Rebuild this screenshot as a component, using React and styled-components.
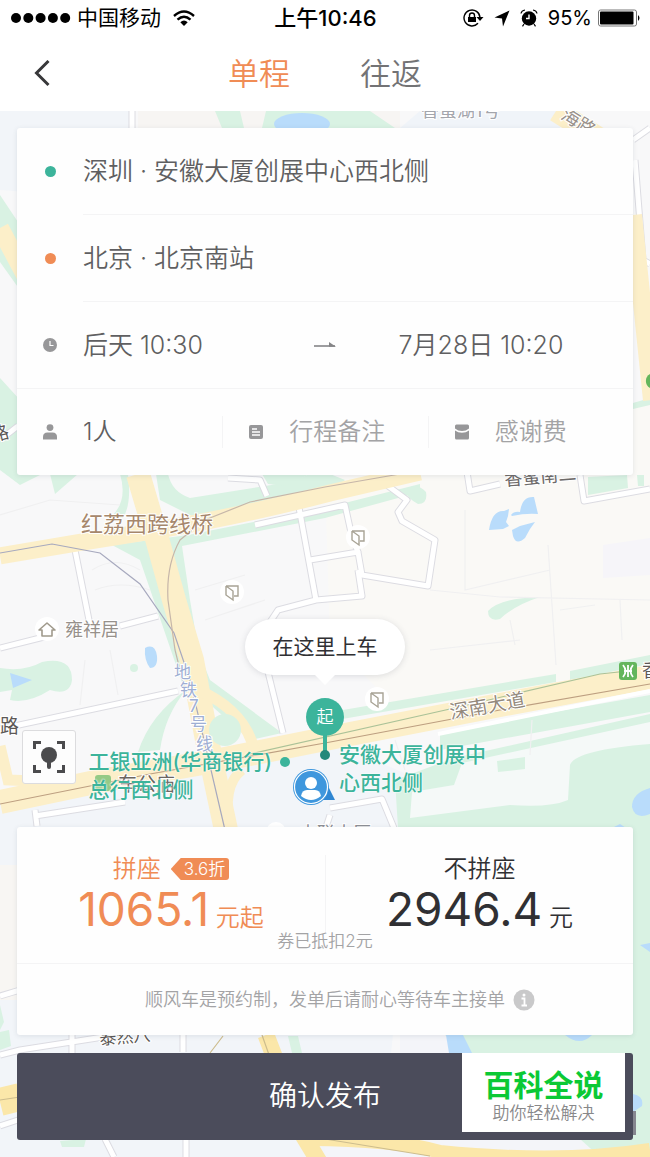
import { useState } from 'react'
import styled, { createGlobalStyle } from 'styled-components'

const colors = {
  orange: '#f08c55',
  teal: '#3cb49b',
  text: '#5f5f61',
  dark: '#303033',
  muted: '#a3a3a5',
  icon: '#979799',
  line: '#f4f4f5',
  slate: '#4b4c5b'
}

const tabs = ['单程', '往返']

const extras = [
  { icon: 'person', label: '1人', filled: true },
  { icon: 'note', label: '行程备注' },
  { icon: 'packet', label: '感谢费' }
]

const App = () => {
  const [tab, setTab] = useState(0)
  const [share, setShare] = useState(true)

  return (
    <Page>
      <GlobalStyle />
      <StatusBar>
        <Carrier>
          <SignalIcon />
          <span>中国移动</span>
          <WifiIcon />
        </Carrier>
        <Clock>上午10:46</Clock>
        <Indicators>
          <LockIcon />
          <LocationIcon />
          <AlarmIcon />
          <span>95%</span>
          <BatteryIcon />
        </Indicators>
      </StatusBar>

      <NavBar>
        <BackButton aria-label="返回">
          <svg width="18" height="28" viewBox="0 0 18 28" fill="none" stroke="#38383a" strokeWidth="3">
            <path d="M15.500 1 L3.500 13 L15.500 25" />
          </svg>
        </BackButton>
        <Tabs>
          {tabs.map((name, idx) => (
            <Tab key={name} $active={tab === idx} onClick={() => setTab(idx)}>{name}</Tab>
          ))}
        </Tabs>
      </NavBar>

      <Main>
        <MapDrawing />

        <Card>
          <Row>
            <Slot><Dot $color={colors.teal} /></Slot>
            <Field>深圳 · 安徽大厦创展中心西北侧</Field>
          </Row>
          <Row>
            <Slot><Dot $color={colors.orange} /></Slot>
            <Field>北京 · 北京南站</Field>
          </Row>
          <TimeRow>
            <TimeStart>
              <Slot><ClockIcon /></Slot>
              <span>后天 10:30</span>
            </TimeStart>
            <svg width="24" height="10" viewBox="0 0 24 10" aria-hidden="true">
              <path d="M1 6 H22" fill="none" stroke="#858587" strokeWidth="1.600" />
              <path d="M16 2 L23 6.800 H16 Z" fill="#858587" />
            </svg>
            <TimeEnd>7月28日 10:20</TimeEnd>
          </TimeRow>
          <ExtrasRow>
            {extras.map(item => (
              <Extra key={item.label} $filled={item.filled}>
                <Slot><ExtraIcon name={item.icon} /></Slot>
                <span>{item.label}</span>
              </Extra>
            ))}
          </ExtrasRow>
        </Card>

        <Stage>
          <LocateButton aria-label="定位">
            <svg width="32" height="32" viewBox="0 0 32 32">
              <path d="M1.500 8 V1.500 H8 M24 1.500 H30.500 V8 M30.500 24 V30.500 H24 M8 30.500 H1.500 V24" fill="none" stroke="#4b4b4d" strokeWidth="3" />
              <circle cx="16" cy="14" r="8" fill="#4b4b4d" />
              <path d="M16 20 V26" stroke="#4b4b4d" strokeWidth="4" strokeLinecap="round" />
            </svg>
          </LocateButton>
          <Bubble>在这里上车</Bubble>
          <Pin><span>起</span></Pin>
          <Me>
            <svg width="44" height="38" viewBox="0 0 44 38">
              <path d="M34 14 L43 32 L24 32 Z" fill="#2f86d2" />
              <circle cx="19" cy="19" r="18" fill="#3f97dd" />
              <circle cx="19" cy="19" r="16.500" fill="none" stroke="#fff" strokeWidth="1.200" />
              <circle cx="19" cy="15" r="6" fill="#fff" />
              <path d="M9 28 Q10 22 15 22 H23 Q28 22 29 28 Q19 36 9 28Z" fill="#fff" />
            </svg>
          </Me>
          <StopDot />
          <LeftStop>工银亚洲(华商银行)<br />总行西北侧</LeftStop>
          <RightStop>安徽大厦创展中<br />心西北侧</RightStop>
        </Stage>

        <Card>
          <Prices>
            <Option $active={share} onClick={() => setShare(true)}>
              <OptionTitle>拼座<Badge>3.6折</Badge></OptionTitle>
              <Price><Amount>1065.1</Amount> 元起</Price>
            </Option>
            <Option $active={!share} onClick={() => setShare(false)}>
              <OptionTitle>不拼座</OptionTitle>
              <Price><Amount>2946.4</Amount> 元</Price>
            </Option>
          </Prices>
          <Coupon>券已抵扣2元</Coupon>
          <Hint>
            <HintText>顺风车是预约制，发单后请耐心等待车主接单</HintText>
            <InfoButton aria-label="说明">
              <svg width="22" height="22" viewBox="0 0 22 22">
                <circle cx="11" cy="11" r="10.500" fill="#c9c9ca" />
                <path d="M8.500 9.500 H11.500 V16 M8.500 16.500 H14" fill="none" stroke="#fff" strokeWidth="1.800" />
                <circle cx="11" cy="6" r="1.500" fill="#fff" />
              </svg>
            </InfoButton>
          </Hint>
        </Card>

        <Footer>
          <Submit>确认发布</Submit>
          <SiteMark>
            <SiteName>百科全说</SiteName>
            <SiteSlogan>助你轻松解决</SiteSlogan>
          </SiteMark>
        </Footer>
      </Main>
    </Page>
  )
}

export default App

const SignalIcon = () => (
  <svg width="60" height="12" viewBox="0 0 60 12">
    {[5, 17.3, 29.600, 41.900, 54.200].map(x => <circle key={x} cx={x} cy="6" r="5" />)}
  </svg>
)

const WifiIcon = () => (
  <svg width="22" height="17" viewBox="0 0 22 17" fill="none" stroke="#000" strokeWidth="2.400">
    <path d="M1 6 Q11 -3 21 6" />
    <path d="M4.500 9.600 Q11 3.800 17.500 9.600" />
    <path d="M7.300 12.200 Q11 9 14.700 12.200 L11 16 Z" fill="#000" stroke="none" />
  </svg>
)

const LockIcon = () => (
  <svg width="21" height="18" viewBox="0 0 21 18">
    <path d="M15 14.300 A8 8 0 1 1 17 8.500" fill="none" stroke="#000" strokeWidth="1.400" />
    <path d="M13.500 8 H20.500 L17 12 Z" />
    <path d="M5 8 H13 V13 H5 Z" />
    <path d="M6.500 8.500 V6.500 A2.500 2.500 0 0 1 11.500 6.500 V8.500" fill="none" stroke="#000" strokeWidth="1.400" />
  </svg>
)

const LocationIcon = () => (
  <svg width="16" height="17" viewBox="0 0 16 17">
    <path d="M15.500 0.500 L9 16.500 L8 8.500 L0.500 7.500 Z" />
  </svg>
)

const AlarmIcon = () => (
  <svg width="18" height="18" viewBox="0 0 18 18">
    <circle cx="9" cy="9.500" r="7.200" />
    <path d="M1 4.500 Q1.500 1.500 5 1 M17 4.500 Q16.500 1.500 13 1 M4 15 L2.500 17.300 M14 15 L15.500 17.300" fill="none" stroke="#000" strokeWidth="1.200" />
    <path d="M9 5.500 V9.500 H6" fill="none" stroke="#fff" strokeWidth="1.400" />
  </svg>
)

const BatteryIcon = () => (
  <svg width="42" height="18" viewBox="0 0 42 18">
    <rect x="0.500" y="1" width="38" height="16" rx="2" fill="#fff" stroke="#777" />
    <rect x="2" y="2.500" width="33.500" height="13" rx="1" />
    <path d="M40 6 Q43 9 40 12 Z" />
  </svg>
)

const ClockIcon = () => (
  <svg width="14" height="14" viewBox="0 0 14 14">
    <circle cx="7" cy="7" r="7" fill={colors.icon} />
    <path d="M7 3 V7.500 H10.500" fill="none" stroke="#fff" strokeWidth="1.200" />
  </svg>
)

const ExtraIcon = ({ name }) => (
  <svg width="16" height="16" viewBox="0 0 16 16" fill={colors.icon}>
    {name === 'person' && (
      <>
        <circle cx="8" cy="3.600" r="3.400" />
        <path d="M1 15.500 V13 Q1 8.500 5.500 8.500 H10.500 Q15 8.500 15 13 V15.500 Z" />
      </>
    )}
    {name === 'note' && (
      <>
        <rect x="1" y="1" width="14" height="14" rx="2" />
        <path d="M4 5 H9 M4 8 H12 M4 11 H12" stroke="#fff" strokeWidth="1.300" />
      </>
    )}
    {name === 'packet' && (
      <>
        <path d="M1 2 Q1 0.500 2.500 0.500 H13.500 Q15 0.500 15 2 V4.500 Q12 7 8 7 Q4 7 1 4.500 Z" />
        <path d="M1 6.500 Q4 8.800 8 8.800 Q12 8.800 15 6.500 V14 Q15 15.500 13.500 15.500 H2.500 Q1 15.500 1 14 Z" />
      </>
    )}
  </svg>
)

const Building = ({ x, y }) => (
  <g transform={`translate(${x} ${y})`}>
    <circle r="12" fill="#fff" />
    <path d="M-6 -6 H6 V4 H2 M-6 -6 V3 L1 8 V-1 L-6 -6" fill="none" stroke="#a8a395" strokeWidth="1.400" />
  </g>
)

const MapDrawing = () => (
  <MapSvg viewBox="0 111 650 1046" preserveAspectRatio="xMidYMin slice" aria-hidden="true">
    <rect y="111" width="650" height="1046" fill="#f8f8f9" />
    {/* districts */}
    <path d="M0 111 H135 V200 L0 190 Z M0 800 L340 745 L420 780 L380 1157 H0 Z" fill="#f2f5f9" />
    <path d="M138 111 H400 V128 H138 Z" fill="#f7f5f3" />
    <path d="M420 111 H560 V128 H400 Z" fill="#f0f4f9" />
    <path d="M325 480 L650 400 V680 L400 712 L330 640 Z" fill="#faf9f6" />
    <path d="M0 865 H20 V1000 H0 Z" fill="#f8f6f3" />
    <path d="M603 545 L650 538 V575 L603 578 Z" fill="#f6f5f9" />

    {/* parks */}
    <g fill="#d9f2e3">
      <path d="M215 111 H240 L244 128 H222 Z M266 111 H370 L395 128 H262 Z" />
      <path d="M0 195 L20 225 V290 L0 262 Z M0 378 L20 400 V475 H40 L20 485 L0 470 Z" />
      <path d="M50 474 H78 L55 494 Z" />
      <path d="M120 474 H128 Q132 505 122 520 L112 516 Q128 500 120 474 Z" />
      <path d="M156 474 H168 Q172 492 190 498 L290 482 L320 470 L345 480 L320 500 L200 520 L160 500 Z" />
      <path d="M188 535 L325 508 L420 484 V492 L325 518 L182 546 L190 600 L207 700 H188 L140 560 L112 545 Z" />
      <path d="M262 474 H310 L285 486 L268 484 Z" />
      <path d="M0 668 Q24 672 42 662 Q72 656 72 680 Q70 696 50 690 Q28 704 10 700 L12 690 L0 692 Z" />
      <path d="M186 690 Q165 715 160 750 L138 752 Q150 715 186 690 Z" />
      <circle cx="134" cy="668" r="4" />
      <path d="M408 488 Q418 483 426 492 Q428 504 418 504 Q402 495 408 488 Z M488 611 Q500 598 540 597 Q515 605 500 619 Q488 622 488 611 Z" />
      <path d="M588 477 L627 475 L628 488 L588 495 Z M637 475 H644 V486 H638 Z" />
      <path d="M395 780 L454 758 L650 714 V1157 H560 L440 1050 L400 860 Z" />
      <path d="M194 640 L210 680 L282 733 L250 740 L205 700 Z" />
      <path d="M325 713 L556 674 V682 L325 722 Z M570 671 L650 655 V664 L570 680 Z" />
      <path d="M440 732 L650 695 V712 L440 750 Z" />
      <path d="M0 1005 L4 1022 L0 1030 Z M0 1032 L9 1030 L11 1046 L0 1050 Z M60 1141 L86 1139 L84 1147 L62 1147 Z M288 1036 H298 L302 1053 H292 Z" />
      <path d="M633 403 L650 398 V405 L633 409 Z" />
    </g>
    <path d="M454 785 L462 763 L650 722 V744 Q575 750 570 765 L568 800 Q550 808 510 805 L410 818 L412 792 Z" fill="#f5f9f8" />
    <path d="M400 1035 H445 L470 1053 H400 Z M325 1139 H580 L600 1157 H325 Z" fill="#f4f5f9" />
    <path d="M497 761 L525 757 V769 L498 772 Z" fill="#d9f2e3" />

    {/* water */}
    <g fill="#b9dcfb">
      <ellipse cx="302" cy="124" rx="28" ry="11" />
      <path d="M489 530 Q492 510 504 511 L509 509 L508 516 L506 522 L509 526 L503 529 Z M511 515 Q514 511 520 512 Q522 496 534 497 L538 514 Q526 513 512 516 Z M512 530 L520 526 L535 522 L530 529 L525 538 Q516 546 513 536 Z" />
      <path d="M145 648 Q155 643 157 656 Q158 668 150 668 Q144 660 145 648 Z M10 673 L32 680 L13 688 Z" />
      <path d="M650 788 Q632 793 632 807 Q635 820 650 814 Z M612 828 L620 824 L626 828 Z M640 945 L650 943 V952 Z" />
      <path d="M446 1035 H463 L472 1053 H449 Z M565 1035 H592 Q580 1047 565 1035 Z M633 1094 Q644 1096 642 1106 L633 1112 Z" />
    </g>

    {/* side streets */}
    <g fill="none" strokeLinejoin="round">
      {['#dcdce2', '#fff'].map((stroke, i) => (
        <g key={stroke} stroke={stroke} strokeWidth={i ? 5 : 7}>
          <path d="M0 648 L48 636 M120 626 L158 616 M75 550 L90 625 M0 729 L178 691" />
          <path d="M228 478 L260 480 L267 496 M255 525 L345 505 L352 537 L358 552 L310 560 M358 552 L362 575 L428 586 L435 540 L402 521 L398 512 L407 500 L380 480" />
          <path d="M298 502 L316 600 L362 596 L358 570 M316 600 L278 610 L270 622" />
          <path d="M268 672 L283 733 M467 472 L470 491 L500 484 M580 475 L584 501 L650 489" />
          <path d="M35 816 L125 802 M35 810 L37 826 M132 111 V128" />
          <path d="M330 808 L382 799 L394 828 M330 815 L325 830" />
          <path d="M0 996 L20 990 M0 1055 L20 1050 L110 1036 M183 1035 V1052 M72 1035 V1053 M105 1139 L114 1157 M186 1139 V1157 M0 1126 L18 1120" />
          <path d="M635 160 L643 260 L650 264 M633 140 L650 128 M0 440 L18 426" />
        </g>
      ))}
    </g>
    <g fill="none" stroke="#f0f0f1" strokeWidth="1.200">
      <path d="M0 515 L50 500 L120 505 M92 570 Q115 555 140 570 M95 590 Q120 580 150 590 M85 660 L80 705 M110 650 L118 695 M195 590 L245 575 M205 620 L265 600" />
      <path d="M465 510 V590 L550 570 M430 590 L500 597 L650 600 M548 545 L556 665 M620 600 L622 640 M510 620 L515 645 M560 610 L595 605 M430 650 L520 640 M532 720 L530 755 M395 740 L405 770" />
    </g>

    {/* main roads */}
    <g fill="none">
      <path d="M0 556 Q80 542 158 530 Q250 514 330 493 L420 472" stroke="#fcefc9" strokeWidth="17" />
      <path d="M138 474 L156 535 L174 600 L192 660 L207 740 L226 830" stroke="#fcefc9" strokeWidth="24" />
      <path d="M0 802 L100 781 L220 760 L340 736 L500 705 L650 677" stroke="#fcefc9" strokeWidth="24" />
      <path d="M198 690 Q245 710 255 752 M0 746 L8 780 L60 782" stroke="#fcefc9" strokeWidth="11" />
      <path d="M242 770 Q222 785 230 830" stroke="#fcefc9" strokeWidth="10" />
      <path d="M0 1102 L20 1097" stroke="#fbe7a9" strokeWidth="28" />
      <path d="M266 1035 L274 1056 L300 1130 L330 1180" stroke="#fbe7a9" strokeWidth="17" />
      <path d="M310 1139 Q400 1140 440 1152 Q560 1164 650 1150" stroke="#fbe7a9" strokeWidth="14" />
      <path d="M0 228 L25 275 M633 215 L652 400" stroke="#fcefc9" strokeWidth="18" />
      <path d="M556 111 L602 140" stroke="#fcefc9" strokeWidth="22" />
      <path d="M438 734 L650 691" stroke="#fff" strokeWidth="4" />
    </g>
    <circle cx="225" cy="730" r="16" fill="#d9f2e3" />

    {/* metro lines */}
    <g fill="none" strokeWidth="1.200">
      <path d="M0 553 L52 544 L100 553 L140 584 L174 633 L190 680 L225 830" stroke="#a7a9be" />
      <path d="M400 474 L325 487 L250 502 L205 520 L180 540 Q166 565 168 600 L175 650 L185 690" stroke="#c6b6a9" />
      <path d="M0 804 L150 774 L325 743 L500 710 L650 684" stroke="#bd9f81" />
      <path d="M250 754 L450 709 L600 674 L628 671" stroke="#abc298" />
      <path d="M0 1100 L20 1097 M210 1053 L223 1036 M262 1035 L285 1100 M325 1139 L430 1156" stroke="#cdbd8e" />
    </g>

    <Building x={358} y={537} />
    <Building x={232} y={592} />
    <Building x={377} y={699} />
    <circle cx="47" cy="629" r="12" fill="#fff" />
    <path d="M39 630 L47 623 L55 630 H52 V636 H42 V630 Z" fill="none" stroke="#a09a8c" strokeWidth="1.600" strokeLinejoin="round" />
    <circle cx="276" cy="832" r="10" fill="#fff" />
    <g transform="translate(619 662)">
      <rect width="18" height="18" rx="3" fill="#64b65c" />
      <path d="M4 3 Q9 9 4 15 M14 3 Q9 9 14 15 M9 3 V15 M5 9 H13" fill="none" stroke="#fff" strokeWidth="1.800" />
    </g>
    <rect x="95" y="775" width="16" height="16" rx="3" fill="#94ca86" />
    <path d="M650 374 V388 A8 8 0 0 1 650 374" fill="#64b65c" />
    <rect x="632" y="1111" width="4" height="24" fill="#85868f" />

    {/* place names */}
    <MapText x="81" y="532" $size={22} $color="#a6876c">红荔西跨线桥</MapText>
    <MapText x="65" y="636" $size={18} $color="#97918b">雍祥居</MapText>
    <MapText x="421" y="117" $size={18} $color="#a3a5ac">香蜜湖1号</MapText>
    <MapText x="505" y="486" $size={18} $color="#6d6a69" transform="rotate(-5 505 486)">香蜜南二</MapText>
    <MapText x="560" y="118" $size={18} $color="#98918a" transform="rotate(32 560 118)">海路</MapText>
    <MapText x="451" y="719" $size={19} $color="#94897c" transform="rotate(-10 451 719)">深南大道</MapText>
    <MapText x="174 180 189 190 196" y="678 696 712 730 750" $size={17} $color="#9fafd3">地铁7号线</MapText>
    <MapText x="642" y="677" $size={18} $color="#5c5856">香</MapText>
    <MapText x="0" y="733" $size={19} $color="#5c5856">路</MapText>
    <MapText x="-8" y="440" $size={18} $color="#5c5856" transform="rotate(-15 0 438)">路</MapText>
    <MapText x="118" y="791" $size={19} $color="#6b6560">车公庙</MapText>
    <MapText x="299" y="840" $size={18} $color="#8d8f95">中联大厦</MapText>
    <MapText x="100" y="1045" $size={17} $color="#5c5856" transform="rotate(-5 100 1045)">泰然八</MapText>
  </MapSvg>
)

const GlobalStyle = createGlobalStyle`
  * {
    box-sizing: border-box;
  }

  body {
    margin: 0;
    font-family: Inter, "Noto Sans CJK SC", sans-serif;
    font-weight: 350;
    color: ${colors.text};
  }

  button {
    margin: 0;
    padding: 0;
    border: 0;
    background: none;
    font: inherit;
    color: inherit;
    text-align: left;
    cursor: pointer;
  }

  svg {
    display: block;
    flex: none;
  }
`

const Page = styled.div`
  min-height: 100vh;
  display: flex;
  flex-direction: column;
  background: #fff;
`

const StatusBar = styled.div`
  display: grid;
  grid-template-columns: 1fr auto 1fr;
  align-items: center;
  height: 36px;
  padding: 0 10px 0 11px;
  font-size: 21px;
  font-weight: 400;
  line-height: 24px;
  color: #000;
  white-space: nowrap;
`

const Carrier = styled.div`
  display: flex;
  align-items: center;
  gap: 6px;

  svg:last-child {
    margin-left: 6px;
  }
`

const Clock = styled.span`
  font-size: 22px;
  font-weight: 500;
`

const Indicators = styled.div`
  display: flex;
  align-items: center;
  justify-content: flex-end;
  gap: 10px;
  font-size: 20px;

  svg:last-child {
    margin-left: -4px;
  }
`

const NavBar = styled.header`
  display: grid;
  grid-template-columns: 1fr auto 1fr;
  align-items: center;
  height: 75px;
  padding: 0 33px;
`

const BackButton = styled.button`
  justify-self: start;
`

const Tabs = styled.nav`
  display: flex;
  gap: 70px;
`

const Tab = styled.button`
  font-size: 31px;
  line-height: 40px;
  color: ${props => (props.$active ? colors.orange : '#737375')};
`

const Main = styled.main`
  position: relative;
  flex: 1;
  display: flex;
  flex-direction: column;
  padding: 17px;
  overflow: hidden;
`

const MapSvg = styled.svg`
  position: absolute;
  inset: 0;
  width: 100%;
  height: 100%;
`

const MapText = styled.text`
  font-size: ${props => props.$size}px;
  font-weight: 400;
  fill: ${props => props.$color};
  stroke: #fff;
  stroke-width: 2px;
  paint-order: stroke;
`

const Card = styled.section`
  position: relative;
  border-radius: 3px;
  background: #fefefe;
  box-shadow: 0 1px 5px rgba(60, 70, 90, 0.12);
`

const Row = styled.button`
  display: flex;
  align-items: center;
  width: 100%;
  height: 87px;
  font-size: 25px;
  line-height: 32px;
`

const Slot = styled.span`
  flex: none;
  width: 66px;
  display: flex;
  justify-content: center;
`

const Dot = styled.i`
  width: 11px;
  height: 11px;
  border-radius: 50%;
  background: ${props => props.$color};
`

const Field = styled.span`
  flex: 1;
  align-self: stretch;
  display: flex;
  align-items: center;
  border-bottom: 1px solid ${colors.line};
`

const TimeRow = styled.div`
  display: grid;
  grid-template-columns: 1fr auto 1fr;
  align-items: center;
  height: 87px;
  border-bottom: 1px solid ${colors.line};
  font-size: 25px;
  line-height: 32px;
`

const TimeStart = styled.button`
  display: flex;
  align-items: center;
`

const TimeEnd = styled.button`
  padding-right: 8px;
  text-align: center;
`

const ExtrasRow = styled.div`
  display: grid;
  grid-template-columns: repeat(3, 1fr);
  align-items: center;
  height: 86px;
  font-size: 24px;
  line-height: 32px;
`

const Extra = styled.button`
  display: flex;
  align-items: center;
  height: 32px;
  color: ${props => (props.$filled ? colors.text : colors.muted)};

  & + & {
    border-left: 1px solid ${colors.line};
  }
`

const Stage = styled.div`
  position: relative;
  flex: 1;
  display: flex;
  align-items: flex-end;
  min-height: 352px;
  padding: 0 0 43px 5px;
`

const LocateButton = styled.button`
  display: grid;
  place-items: center;
  width: 54px;
  height: 54px;
  border: 1px solid #dcdcde;
  border-radius: 3px;
  background: #fdfdfd;
`

const Bubble = styled.button`
  position: absolute;
  top: 144px;
  left: 50%;
  width: 160px;
  height: 56px;
  margin-left: -80px;
  border-radius: 28px;
  background: #fff;
  box-shadow: 0 1px 6px rgba(60, 70, 90, 0.16);
  font-size: 21px;
  font-weight: 400;
  line-height: 56px;
  text-align: center;
  color: ${colors.dark};

  &::after {
    content: '';
    position: absolute;
    top: 100%;
    left: 50%;
    margin-left: -10px;
    border: 10px solid transparent;
    border-top-color: #fff;
    border-bottom: 0;
  }
`

const Pin = styled.div`
  position: absolute;
  top: 223px;
  left: 50%;
  display: grid;
  place-items: center;
  width: 38px;
  height: 38px;
  margin-left: -19px;
  border-radius: 50%;
  background: ${colors.teal};
  font-size: 17px;
  line-height: 20px;
  color: #fff;

  &::before {
    content: '';
    position: absolute;
    top: 36px;
    width: 4px;
    height: 18px;
    background: ${colors.teal};
  }

  &::after {
    content: '';
    position: absolute;
    top: 52px;
    width: 10px;
    height: 10px;
    border-radius: 50%;
    background: #25897a;
  }
`

const Me = styled.div`
  position: absolute;
  top: 293px;
  left: 50%;
  margin-left: -33px;
`

const StopDot = styled.i`
  position: absolute;
  top: 282px;
  left: 50%;
  width: 10px;
  height: 10px;
  margin-left: -45px;
  border-radius: 50%;
  background: ${colors.teal};
`

const StopName = styled.div`
  position: absolute;
  font-size: 21px;
  font-weight: 500;
  line-height: 28px;
  white-space: nowrap;
  color: ${colors.teal};
  text-shadow: 0 0 2px #fff, 0 0 2px #fff;
`

const LeftStop = styled(StopName)`
  top: 273px;
  right: 50%;
  margin-right: 53px;
`

const RightStop = styled(StopName)`
  top: 266px;
  left: 50%;
  margin-left: 14px;
`

const Prices = styled.div`
  display: grid;
  grid-template-columns: 1fr 1fr;
  padding-top: 28px;
`

const Option = styled.button`
  text-align: center;
  font-size: 24px;
  color: ${props => (props.$active ? colors.orange : colors.dark)};

  & + & {
    border-left: 1px solid ${colors.line};
  }
`

const OptionTitle = styled.div`
  display: flex;
  align-items: center;
  justify-content: center;
  gap: 10px;
  line-height: 28px;
`

const Badge = styled.span`
  height: 22px;
  padding: 0 4px 0 13px;
  border-radius: 3px;
  background: ${colors.orange};
  clip-path: polygon(0 50%, 10px 0, 100% 0, 100% 100%, 10px 100%);
  font-size: 17px;
  line-height: 22px;
  color: #fff;
`

const Price = styled.div`
  margin-top: 2px;
  line-height: 24px;
`

const Amount = styled.span`
  font-size: 46px;
  font-weight: 400;
  line-height: 48px;
`

const Coupon = styled.div`
  padding-bottom: 14px;
  border-bottom: 1px solid ${colors.line};
  font-size: 17px;
  line-height: 16px;
  text-align: center;
  color: ${colors.muted};
`

const Hint = styled.div`
  display: grid;
  grid-template-columns: 1fr auto 1fr;
  align-items: center;
  column-gap: 8px;
  height: 71px;
`

const HintText = styled.span`
  grid-column: 2;
  font-size: 18px;
  line-height: 24px;
  color: ${colors.muted};
`

const InfoButton = styled.button`
  justify-self: start;
`

const Footer = styled.footer`
  position: relative;
  margin-top: 18px;
`

const Submit = styled.button`
  display: block;
  width: 100%;
  height: 87px;
  border-radius: 3px;
  background: ${colors.slate};
  font-size: 28px;
  line-height: 87px;
  text-align: center;
  color: #fff;
`

const SiteMark = styled.div`
  position: absolute;
  top: 0;
  right: 8px;
  width: 163px;
  height: 79px;
  padding-top: 16px;
  background: #fff;
  text-align: center;
`

const SiteName = styled.div`
  font-size: 30px;
  font-weight: 700;
  line-height: 32px;
  color: #0bc935;
`

const SiteSlogan = styled.div`
  font-size: 17px;
  line-height: 24px;
  color: #88888a;
`
